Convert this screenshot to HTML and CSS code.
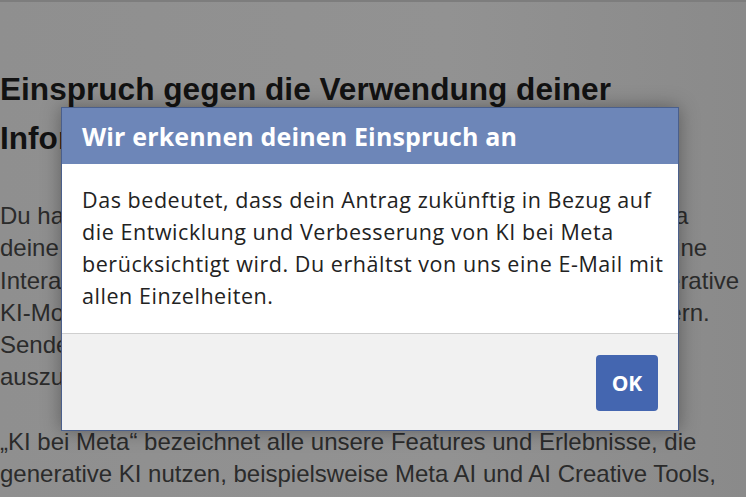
FILE: index.html
```html
<!DOCTYPE html>
<html lang="de">
<head>
<meta charset="utf-8">
<title>Einspruch</title>
<link rel="stylesheet" href="styles.css">
</head>
<body>
<div class="page">
  <h1 class="title">Einspruch gegen die Verwendung deiner<br>Informationen für KI bei Meta</h1>
  <p class="para">Du hast das Recht, Einspruch gegen die Nutzung für KI bei Meta<br>deine Informationen einzulegen. Dazu gehören zum Beispiel deine<br>Interaktionen mit KI bei Meta, die wir benutzen, um unsere generative<br>KI-Modelle für KI bei Meta weiter zu entwickeln und zu verbessern.<br>Sende uns dieses Formular, um deinen Einspruch<br>auszuüben.</p>
  <p class="para">„KI bei Meta“ bezeichnet alle unsere Features und Erlebnisse, die<br>generative KI nutzen, beispielsweise Meta AI und AI Creative Tools,<br>sowie die Modelle, die diese ermöglichen. Wir teilen mit Modelle</p>
</div>
<div class="modal" role="dialog">
  <div class="modal-head">Wir erkennen deinen Einspruch an</div>
  <div class="modal-body">Das bedeutet, dass dein Antrag zukünftig in Bezug auf<br>die Entwicklung und Verbesserung von KI bei Meta<br>berücksichtigt wird. Du erhältst von uns eine E-Mail mit<br>allen Einzelheiten.</div>
  <div class="modal-foot"><button class="ok">OK</button></div>
</div>
</body>
</html>
```
FILE: styles.css
```css
html, body {
  margin: 0;
  padding: 0;
}
body {
  width: 746px;
  height: 497px;
  overflow: hidden;
  background: linear-gradient(90deg, #8f8f8f 0%, #929292 60%, #8a8a8a 100%);
  font-family: "Liberation Sans", Arial, sans-serif;
}
.page {
  padding: 63px 0 0 0;
  border-top: 2px solid #7d7d7d;
}
.title {
  margin: 0;
  font-size: 31.6px;
  line-height: 49px;
  font-weight: bold;
  color: #121212;
  white-space: nowrap;
}
.para {
  margin: 37px 0 0 0;
  font-size: 24px;
  line-height: 32.3px;
  color: #2b2b2b;
  white-space: nowrap;
}
.para + .para {
  margin-top: 32.3px;
}
.modal {
  position: absolute;
  left: 61px;
  top: 107px;
  width: 616px;
  border: 1px solid #4a5f8c;
  background: #fff;
  box-shadow: 0 0 18px rgba(0,0,0,0.35);
  font-family: "Open Sans", sans-serif;
}
.modal-head {
  height: 56px;
  display: flex;
  align-items: center;
  padding: 0 20px;
  background: #6d86b8;
  color: #fff;
  font-weight: bold;
  font-size: 25px;
  letter-spacing: 0.15px;
  white-space: nowrap;
}
.modal-body {
  padding: 20px 20px 21px;
  font-size: 21.5px;
  letter-spacing: 0.55px;
  line-height: 32px;
  color: #222;
  border-bottom: 1px solid #cfcfcf;
  white-space: nowrap;
}
.modal-foot {
  background: #f1f1f1;
  padding: 21px 20px 19px;
  display: flex;
  justify-content: flex-end;
}
.ok {
  width: 62px;
  height: 56px;
  border: none;
  border-radius: 4px;
  background: #4466b0;
  color: #fff;
  font-family: "Open Sans", sans-serif;
  font-weight: bold;
  font-size: 21px;
  padding: 0;
}
```
